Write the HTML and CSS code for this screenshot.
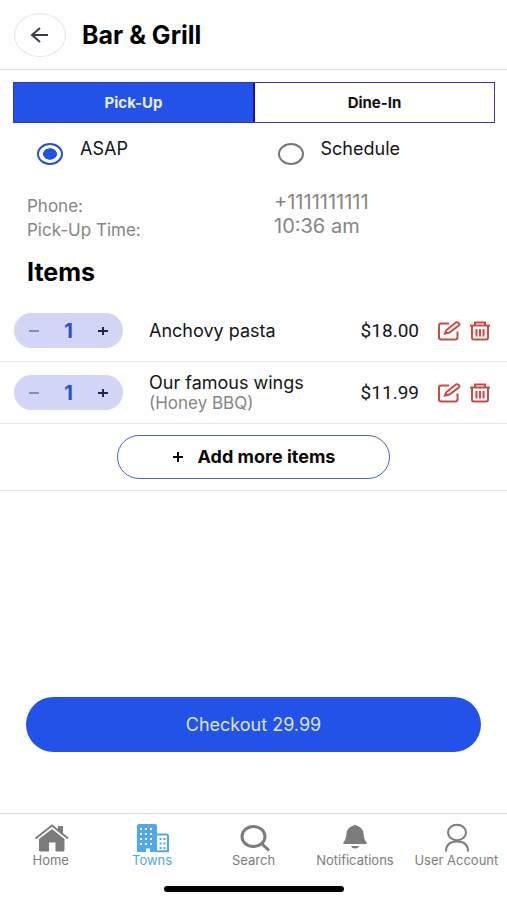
FILE: index.html
```html
<!DOCTYPE html>
<html lang="en">
<head>
<meta charset="utf-8">
<meta name="viewport" content="width=device-width, initial-scale=1">
<title>Bar &amp; Grill</title>
<link rel="stylesheet" href="styles.css">
</head>
<body>
<svg class="sprite" aria-hidden="true">
  <symbol id="edit" viewBox="0 0 24 20"><path d="M12 2.500H4.500Q2 2.500 2 4.500V16.500Q2 18.500 4.500 18.500H18Q20.500 18.500 20.500 16.500V10.500M8 12.500L9.500 9L18.500 1.700Q20 .8 21.700 2Q23 3.300 21.700 4.500L12.500 11.500Z"/></symbol>
  <symbol id="trash" viewBox="0 0 22 20"><path d="M1 4.500H21M6 4V1.500H16V4M3 4.500V16.500Q3 18.500 5 18.500H17Q19 18.500 19 16.500V4.500M7.500 8V15.500M11 8V15.500M14.500 8V15.500"/></symbol>
</svg>
<header class="header">
  <button class="back" aria-label="Back"><svg width="20" height="16" viewBox="0 0 20 16"><path d="M18 8H2M10 1L2 8L10 15"/></svg></button>
  <h1 class="title">Bar &amp; Grill</h1>
</header>
<main class="main">
  <div class="tabs">
    <button class="tab tab-active">Pick-Up</button>
    <button class="tab">Dine-In</button>
  </div>
  <div class="times">
    <label class="time"><input class="radio" type="radio" name="time" checked><span>ASAP</span></label>
    <label class="time"><input class="radio" type="radio" name="time"><span>Schedule</span></label>
  </div>
  <dl class="details">
    <div class="detail-names"><dt>Phone:</dt><dt>Pick-Up Time:</dt></div>
    <div class="detail-values"><dd>+1111111111</dd><dd>10:36 am</dd></div>
  </dl>
  <h2 class="heading">Items</h2>
  <ul class="items">
    <li class="item">
      <div class="stepper">
        <button class="step step-minus" aria-label="Remove one"><svg width="10" height="10" viewBox="0 0 10 10"><path d="M0 5H10"/></svg></button>
        <span class="count">1</span>
        <button class="step" aria-label="Add one"><svg width="10" height="10" viewBox="0 0 10 10"><path d="M0 5H10M5 1V9"/></svg></button>
      </div>
      <div class="name">Anchovy pasta</div>
      <div class="price">$18.00</div>
      <div class="actions">
        <button class="action" aria-label="Edit"><svg width="24" height="20"><use href="#edit"/></svg></button>
        <button class="action" aria-label="Delete"><svg width="22" height="20"><use href="#trash"/></svg></button>
      </div>
    </li>
    <li class="item">
      <div class="stepper">
        <button class="step step-minus" aria-label="Remove one"><svg width="10" height="10" viewBox="0 0 10 10"><path d="M0 5H10"/></svg></button>
        <span class="count">1</span>
        <button class="step" aria-label="Add one"><svg width="10" height="10" viewBox="0 0 10 10"><path d="M0 5H10M5 1V9"/></svg></button>
      </div>
      <div class="name">Our famous wings<div class="option">(Honey BBQ)</div></div>
      <div class="price">$11.99</div>
      <div class="actions">
        <button class="action" aria-label="Edit"><svg width="24" height="20"><use href="#edit"/></svg></button>
        <button class="action" aria-label="Delete"><svg width="22" height="20"><use href="#trash"/></svg></button>
      </div>
    </li>
  </ul>
  <div class="more">
    <button class="add"><svg width="12" height="10" viewBox="0 0 12 10"><path d="M1 5H11M6 0V10"/></svg>Add more items</button>
  </div>
  <button class="checkout">Checkout 29.99</button>
</main>
<nav class="nav">
  <div class="links">
    <a class="link" href="#home"><svg width="34" height="28" viewBox="0 0 34 28"><path class="fill" d="M18 5L30.500 15V26Q30.500 27.500 29 27.500H21.500V18.500H15V27.500H6.500Q5 27.500 5 26V15ZM24 2H29V10L24 6Z"/><path class="roof" d="M1.500 14.500L18 1.500L34 14.500"/></svg>Home</a>
    <a class="link link-active" href="#towns"><svg width="34" height="28" viewBox="0 0 34 28"><path class="fill" d="M4 0H20Q22 0 22 2V28H15V24.500H11V28H2V2Q2 0 4 0Z"/><path class="building" d="M22 10.500H31.500Q33 10.500 33 12V27.200H22"/><path class="holes" d="M5 5H20M5 10H20M5 15H20M5 20H20"/><path class="dots" d="M24.500 15H31M24.500 19.500H31M24.500 24H31"/></svg>Towns</a>
    <a class="link" href="#search"><svg width="34" height="28" viewBox="0 0 34 28"><ellipse class="thick" cx="16.500" cy="12.500" rx="11.500" ry="10"/><path class="thick" d="M24.500 19.500L32 26.500"/></svg>Search</a>
    <a class="link" href="#notifications"><svg width="34" height="28" viewBox="0 0 34 28"><path class="fill" d="M15.500 1.500Q17 0 18.500 1.500Q25 3.500 25.500 9.500Q26 16 28.500 18Q29.500 20 27 20H7Q4.500 20 5.500 18Q8 16 8.500 9.500Q9 3.500 15.500 1.500ZM13 22H21Q20 24.500 17 24.500Q14 24.500 13 22Z"/></svg>Notifications</a>
    <a class="link" href="#account"><svg width="34" height="28" viewBox="0 0 34 28"><ellipse class="line" cx="18" cy="8.500" rx="9" ry="7.700"/><path class="line" d="M7 27.500Q7 17.500 18 17.500Q29 17.500 29 27.500"/></svg>User Account</a>
  </div>
  <div class="handle"></div>
</nav>
</body>
</html>
```
FILE: styles.css
```css
* { box-sizing: border-box; }

body {
  margin: 0;
  min-height: 100vh;
  display: flex;
  flex-direction: column;
  background: #fefefe;
  color: #151515;
  font-family: Inter, "Liberation Sans", sans-serif;
  font-size: 18px;
  line-height: 20px;
}

button {
  margin: 0;
  padding: 0;
  border: 0;
  background: none;
  color: inherit;
  font: inherit;
  cursor: pointer;
}

svg { display: block; fill: none; stroke: currentColor; stroke-width: 2; }
.sprite { display: none; }
h1, h2, ul, dl, dd { margin: 0; padding: 0; }

.header {
  display: flex;
  align-items: center;
  gap: 16px;
  height: 70px;
  padding: 0 14px;
  border-bottom: 1px solid #e4e4e4;
}

.back {
  display: grid;
  place-items: center;
  width: 52px;
  height: 44px;
  border: 1px solid #e6e6e8;
  border-radius: 50%;
  color: #3a3a4c;
}

.title, .heading { color: #000; font-size: 25px; line-height: 28px; font-weight: 700; }

.main { flex: 1; display: flex; flex-direction: column; padding-top: 12px; }

.tabs { display: flex; margin: 0 12px 0 13px; border: 1px solid #3b35a8; }

.tab {
  flex: 1;
  height: 39px;
  color: #111;
  font-size: 15px;
  font-weight: 700;
}

.tab-active { background: #2352e8; color: #e9efff; border-right: 2px solid #1510c4; }

.times { display: flex; padding: 16px 13px 0; }
.time { flex: 1; display: flex; gap: 17px; padding-left: 24px; }

.radio {
  appearance: none;
  width: 26px;
  height: 22px;
  margin: 4px 0 0;
  border: 2px solid #777;
  border-radius: 50%;
}

.radio:checked {
  border-color: #2450d8;
  background: radial-gradient(closest-side, #2450e0 60%, transparent 66%);
}

.details { display: flex; padding: 25px 27px 0; color: #858585; }
.detail-names { width: 247px; padding-top: 4px; font-size: 17px; }
.detail-names, .detail-values { line-height: 24px; }
.detail-values { font-size: 20px; }

.heading { padding: 16px 27px 0; }

.items { padding-top: 14px; list-style: none; }

.item {
  display: flex;
  align-items: center;
  height: 62px;
  padding: 0 16px 0 14px;
  border-bottom: 1px solid #e8e8e8;
}

.stepper {
  display: flex;
  align-items: center;
  justify-content: space-between;
  width: 109px;
  height: 35px;
  margin-right: 26px;
  padding: 0 6px;
  border-radius: 18px;
  background: #d2d5f5;
}

.step { display: grid; place-items: center; width: 28px; height: 35px; color: #28283c; }
.step-minus { color: #8c8ea4; }
.count { color: #2851cf; font-size: 20px; font-weight: 700; }
.name { flex: 1; line-height: 21px; }
.option { color: #858585; font-size: 17px; }
.price { margin-right: 18px; font-family: Roboto, sans-serif; font-size: 19px; }
.actions { display: flex; gap: 8px; color: #cb4a43; }

.more {
  display: flex;
  justify-content: center;
  padding: 11px 0;
  border-bottom: 1px solid #e8e8e8;
}

.add {
  display: flex;
  align-items: center;
  justify-content: center;
  gap: 14px;
  width: 54%;
  height: 44px;
  border: 1px solid #4866be;
  border-radius: 22px;
  color: #080808;
  font-weight: 700;
}

.checkout {
  height: 55px;
  margin: auto 26px 61px;
  border-radius: 28px;
  background: #2352e8;
  color: #dce6ff;
}

.nav { height: 87px; border-top: 1px solid #dcdcdc; }
.links { display: flex; padding-top: 10px; }

.link {
  flex: 1 1 0;
  min-width: 0;
  display: flex;
  flex-direction: column;
  align-items: center;
  color: #7c7c7c;
  font-size: 13px;
  line-height: 16px;
  white-space: nowrap;
  text-decoration: none;
}

.link svg { overflow: visible; }
.link-active { color: #50a7eb; }
.fill { fill: currentColor; stroke: none; }
.thick { stroke-width: 3; }
.building, .roof { stroke-width: 2; }
.holes { stroke: #fefefe; stroke-dasharray: 2 3; }
.dots { stroke-dasharray: 2 2; }

.handle { width: 180px; height: 6px; margin: 18px auto 0; border-radius: 3px; background: #000; }
```
